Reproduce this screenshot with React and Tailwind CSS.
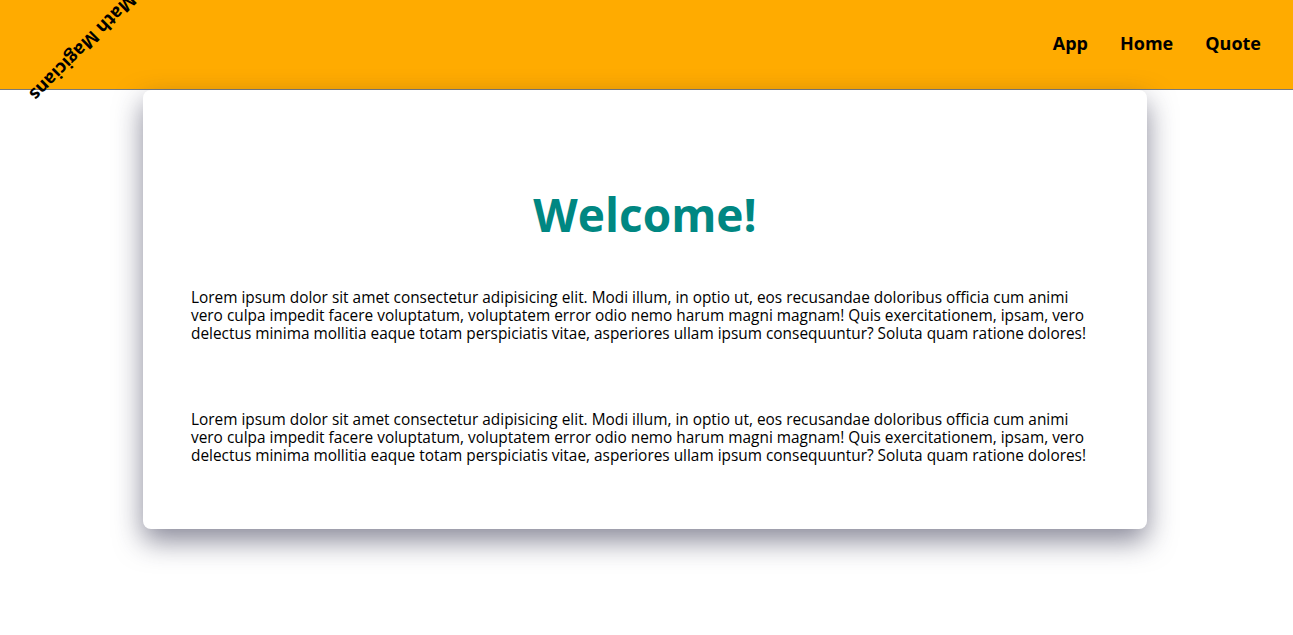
export default function App() {
  const text =
    'Lorem ipsum dolor sit amet consectetur adipisicing elit. Modi illum, in optio ut, eos recusandae doloribus officia cum animi vero culpa impedit facere voluptatum, voluptatem error odio nemo harum magni magnam! Quis exercitationem, ipsam, vero delectus minima mollitia eaque totam perspiciatis vitae, asperiores ullam ipsum consequuntur? Soluta quam ratione dolores!';

  return (
    <div className="min-h-screen bg-white font-['Open_Sans',sans-serif] text-black overflow-hidden">
      <header className="h-[90px] bg-[#ffab00] border-b border-[#7a7a7a] flex items-center justify-between">
        <div className="w-[160px] h-full relative">
          <span className="absolute left-[12px] top-[34px] whitespace-nowrap text-[18px] font-bold rotate-[135deg]">
            Math Magicians
          </span>
        </div>
        <nav className="flex gap-8 pr-8 text-[18px] font-bold -mt-[2px]">
          <a>App</a>
          <a>Home</a>
          <a>Quote</a>
        </nav>
      </header>
      <main className="ml-[143px] w-[1004px] bg-white rounded-lg shadow-[0_12px_28px_rgba(40,40,70,0.55)] px-12 pt-[96px] pb-[64px]">
        <h1 className="text-center text-[46px] leading-[56px] font-bold text-[#008782]">Welcome!</h1>
        <p className="mt-[47px] text-[15.4px] leading-[18px]">{text}</p>
        <p className="mt-[68px] text-[15.4px] leading-[18px]">{text}</p>
      </main>
    </div>
  );
}
